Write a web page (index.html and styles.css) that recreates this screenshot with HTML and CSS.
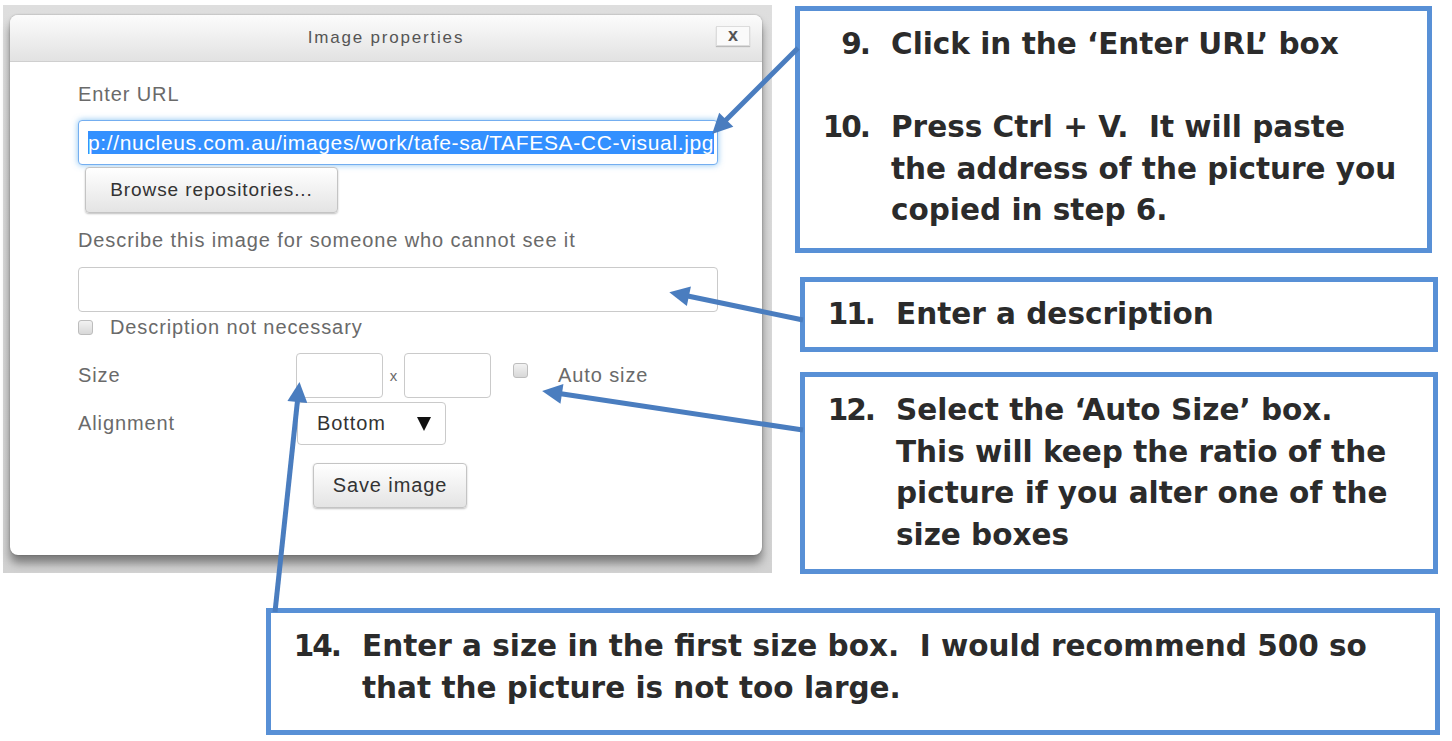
FILE: index.html
```html
<!DOCTYPE html>
<html lang="en">
<head>
  <meta charset="UTF-8" />
  <title>Image properties - steps 9 to 14</title>
  <link rel="stylesheet" href="styles.css">
</head>
<body>
  <div class="sheet">
    <div class="top">
      <div class="shot">
        <div class="dialog">
          <div class="dlg-head">
            <span></span>
            <span class="dlg-title">Image properties</span>
            <span class="dlg-close">x</span>
          </div>
          <div class="dlg-body">
            <div class="label">Enter URL</div>
            <div class="field url"><span class="sel">p://nucleus.com.au/images/work/tafe-sa/TAFESA-CC-visual.jpg</span></div>
            <div class="btn browse">Browse repositories...</div>
            <div class="label desc-label">Describe this image for someone who cannot see it</div>
            <div class="field desc"></div>
            <div class="check-row"><span class="check"></span>Description not necessary</div>
            <div class="row size-row">
              <span class="row-label">Size</span>
              <span class="field small"></span>
              <span class="times">x</span>
              <span class="field small"></span>
              <span class="check"></span>
              <span>Auto size</span>
            </div>
            <div class="row align-row">
              <span class="row-label">Alignment</span>
              <span class="select">Bottom <span class="caret"></span></span>
            </div>
            <div class="btn save">Save image</div>
          </div>
        </div>
      </div>

      <div class="notes">
        <div class="note note-1">
          <div class="item"><span class="num">9.</span><span>Click in the ‘Enter URL’ box</span></div>
          <div class="item gap"><span class="num">10.</span><span>Press Ctrl + V.&nbsp; It will paste<br>the address of the picture you<br>copied in step 6.</span></div>
        </div>
        <div class="note note-2">
          <div class="item"><span class="num">11.</span><span>Enter a description</span></div>
        </div>
        <div class="note note-3">
          <div class="item"><span class="num">12.</span><span>Select the ‘Auto Size’ box.<br>This will keep the ratio of the<br>picture if you alter one of the<br>size boxes</span></div>
        </div>
      </div>
    </div>

    <div class="note note-wide">
      <div class="item"><span class="num">14.</span><span>Enter a size in the first size box.&nbsp; I would recommend 500 so<br>that the picture is not too large.</span></div>
    </div>

    <svg class="arrows" width="1452" height="741" viewBox="0 0 1452 741">
      <defs>
        <marker id="head" viewBox="0 0 10 10" refX="3" refY="5" markerWidth="22" markerHeight="20" markerUnits="userSpaceOnUse" orient="auto">
          <path d="M0,0 L10,5 L0,10 z" fill="#4a7dbf"/>
        </marker>
      </defs>
      <g stroke="#4a7dbf" stroke-width="5" fill="none" marker-end="url(#head)">
        <line x1="798" y1="48" x2="722" y2="124"/>
        <line x1="803" y1="320" x2="683" y2="295"/>
        <line x1="803" y1="430" x2="556" y2="393"/>
        <line x1="275" y1="612" x2="298" y2="396"/>
      </g>
    </svg>
  </div>
</body>
</html>
```

FILE: styles.css
```css
* {
  margin: 0;
  padding: 0;
  box-sizing: border-box;
}
body {
  background: #fff;
  font-family: "Liberation Sans", Arial, sans-serif;
  overflow: hidden;
}
.sheet {
  position: relative;
  width: 1452px;
  height: 741px;
}
.top {
  display: flex;
  align-items: flex-start;
}

/* screenshot of the dialog */
.shot {
  margin: 5px 0 0 3px;
  width: 769px;
  height: 568px;
  padding: 10px 0 0 7px;
  background: linear-gradient(#dedede, #d2d2d2);
}
.dialog {
  width: 752px;
  height: 540px;
  background: #fff;
  border-radius: 8px;
  overflow: hidden;
  box-shadow: 0 8px 10px rgba(0, 0, 0, 0.42), 0 0 2px rgba(0, 0, 0, 0.3);
}
.dlg-head {
  height: 47px;
  display: grid;
  grid-template-columns: 1fr auto 1fr;
  align-items: center;
  background: linear-gradient(#fcfcfc, #e2e2e2);
  border-bottom: 1px solid #cfcfcf;
}
.dlg-title {
  font-size: 17px;
  letter-spacing: 1.8px;
  color: #555;
}
.dlg-close {
  justify-self: end;
  margin: -4px 12px 0 0;
  width: 34px;
  height: 20px;
  background: #fafafa;
  border: 1px solid #dcdcdc;
  box-shadow: 0 1px 1px rgba(0, 0, 0, 0.2);
  font-size: 18px;
  font-weight: bold;
  color: #555;
  text-align: center;
  line-height: 17px;
}
.dlg-body {
  padding: 20px 44px 0 68px;
  font-size: 20px;
  letter-spacing: 0.9px;
  color: #6a6a6a;
}
.label {
  line-height: 24px;
}
.field {
  display: block;
  height: 45px;
  background: #fff;
  border: 1px solid #cacaca;
  border-radius: 4px;
}
.url {
  margin-top: 14px;
  display: flex;
  align-items: center;
  padding-left: 9px;
  white-space: nowrap;
  font-size: 21px;
  letter-spacing: 0.65px;
  border-color: #74aef0;
  box-shadow: 0 0 6px rgba(82, 168, 236, 0.7);
}
.sel {
  background: #3390ff;
  color: #fff;
  line-height: 23px;
}
.btn {
  display: flex;
  align-items: center;
  justify-content: center;
  background: linear-gradient(#fff, #e4e4e4);
  border: 1px solid #c4c4c4;
  border-radius: 4px;
  box-shadow: 0 1px 2px rgba(0, 0, 0, 0.25);
  color: #333;
}
.browse {
  margin: 2px 0 0 7px;
  width: 253px;
  height: 46px;
  font-size: 19px;
}
.desc-label {
  margin-top: 15px;
}
.desc {
  margin-top: 15px;
}
.check-row {
  margin-top: 3px;
  display: flex;
  align-items: center;
  line-height: 24px;
}
.check {
  width: 15px;
  height: 15px;
  background: linear-gradient(#f2f2f2, #d8d8d8);
  border: 1px solid #bdbdbd;
  border-radius: 3px;
}
.check-row .check {
  margin-right: 17px;
}
.row {
  display: flex;
  align-items: center;
}
.size-row {
  margin-top: 14px;
  height: 45px;
}
.row-label {
  width: 218px;
}
.small {
  width: 87px;
}
.times {
  width: 21px;
  text-align: center;
  font-size: 15px;
  letter-spacing: 0;
}
.size-row .check {
  margin: -10px 30px 0 22px;
}
.align-row {
  margin-top: 4px;
  height: 43px;
}
.align-row .row-label {
  width: 219px;
}
.select {
  width: 149px;
  height: 43px;
  display: flex;
  align-items: center;
  justify-content: space-between;
  padding: 0 14px 0 19px;
  border: 1px solid #cacaca;
  border-radius: 4px;
  color: #333;
}
.caret {
  width: 0;
  height: 0;
  border-left: 7px solid transparent;
  border-right: 7px solid transparent;
  border-top: 14px solid #111;
}
.save {
  margin: 18px 0 0 235px;
  width: 154px;
  height: 45px;
}

/* callout boxes */
.notes {
  margin-left: 28px;
  width: 638px;
  display: flex;
  flex-direction: column;
}
.note {
  border: 5px solid #5890d6;
  padding: 13px 10px 0 5px;
  font-family: "DejaVu Sans", Verdana, sans-serif;
  font-weight: bold;
  font-size: 29.5px;
  line-height: 41.5px;
  color: #2b2b2b;
  white-space: nowrap;
}
.note-1 {
  margin: 6px 0 0 -5px;
  width: 637px;
  height: 247px;
}
.note-2 {
  margin-top: 24px;
  height: 75px;
  padding-top: 12px;
}
.note-3 {
  margin-top: 20px;
  height: 202px;
}
.note-wide {
  margin: 34px 0 0 266px;
  width: 1174px;
  height: 127px;
}
.item {
  display: flex;
}
.item.gap {
  margin-top: 41.5px;
}
.num {
  flex: none;
  width: 86px;
  padding-right: 22px;
  text-align: right;
  letter-spacing: -2px;
}

.arrows {
  position: absolute;
  top: 0;
  left: 0;
  pointer-events: none;
}
```
